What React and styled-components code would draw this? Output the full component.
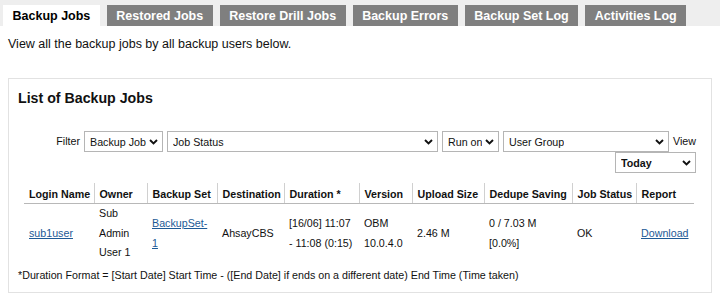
import React from 'react';
import styled, { createGlobalStyle } from 'styled-components';

const GlobalStyle = createGlobalStyle`
  body {
    margin: 0;
    background: #fff;
    font-family: "Liberation Sans", Arial, sans-serif;
    font-size: 10.7px;
    color: #111;
  }
`;

const tabs = ['Backup Jobs', 'Restored Jobs', 'Restore Drill Jobs', 'Backup Errors', 'Backup Set Log', 'Activities Log'];

const columns = [
  { title: 'Login Name', width: 70 },
  { title: 'Owner', width: 53 },
  { title: 'Backup Set', width: 70 },
  { title: 'Destination', width: 67 },
  { title: 'Duration *', width: 75 },
  { title: 'Version', width: 53 },
  { title: 'Upload Size', width: 72 },
  { title: 'Dedupe Saving', width: 88 },
  { title: 'Job Status', width: 64 },
  { title: 'Report', width: 58 },
];

function Chevron() {
  return (
    <svg width="9" height="6" viewBox="0 0 9 6">
      <path d="M1 1 L4.5 4.5 L8 1" fill="none" stroke="#111" strokeWidth="1.9" />
    </svg>
  );
}

function Select({ value, width, bold }) {
  return (
    <SelectBox $width={width} $bold={bold}>
      <span>{value}</span>
      <Chevron />
    </SelectBox>
  );
}

export default function App() {
  return (
    <>
      <GlobalStyle />
      <TabBar>
        {tabs.map((t, i) => (
          <Tab key={t} $active={i === 0}>{t}</Tab>
        ))}
      </TabBar>
      <Intro>View all the backup jobs by all backup users below.</Intro>
      <Panel>
        <PanelTitle>List of Backup Jobs</PanelTitle>
        <Filters>
          <Label>Filter</Label>
          <Select value="Backup Job" width={79} />
          <Select value="Job Status" width={271} />
          <Select value="Run on" width={57} />
          <Select value="User Group" width={166} />
          <Label>View</Label>
          <Break />
          <Select value="Today" width={81} bold />
        </Filters>
        <Table>
          <thead>
            <tr>
              {columns.map((c) => (
                <Th key={c.title} style={{ width: c.width }}>{c.title}</Th>
              ))}
            </tr>
          </thead>
          <tbody>
            <tr>
              <Td><Link>sub1user</Link></Td>
              <Td>Sub<br />Admin<br />User 1</Td>
              <Td><Link>BackupSet-<br />1</Link></Td>
              <Td>AhsayCBS</Td>
              <Td>[16/06] 11:07<br />- 11:08 (0:15)</Td>
              <Td>OBM<br />10.0.4.0</Td>
              <Td>2.46 M</Td>
              <Td>0 / 7.03 M<br />[0.0%]</Td>
              <Td>OK</Td>
              <Td><Link>Download</Link></Td>
            </tr>
          </tbody>
        </Table>
        <Note>*Duration Format = [Start Date] Start Time - ([End Date] if ends on a different date) End Time (Time taken)</Note>
      </Panel>
    </>
  );
}

const TabBar = styled.div`
  display: flex;
  gap: 7px;
  height: 26px;
  padding: 5px 0 0 3px;
  box-sizing: border-box;
  background: #eeeeee;
`;

const Tab = styled.div`
  display: flex;
  align-items: center;
  padding: 0 9.5px;
  font-size: 12.5px;
  font-weight: bold;
  background: ${(p) => (p.$active ? '#fff' : '#7f7f7f')};
  color: ${(p) => (p.$active ? '#000' : '#fff')};
`;

const Intro = styled.div`
  padding: 10px 0 0 8px;
  height: 42px;
  box-sizing: border-box;
  font-size: 12.5px;
  line-height: 16px;
`;

const Panel = styled.div`
  margin: 10px 8px 0;
  height: 215px;
  box-sizing: border-box;
  border: 1px solid #e2e2e2;
  padding: 11px 0 0 9px;
`;

const PanelTitle = styled.div`
  font-size: 14.2px;
  font-weight: bold;
  line-height: 16px;
`;

const Filters = styled.div`
  display: flex;
  flex-wrap: wrap;
  justify-content: flex-end;
  align-items: center;
  column-gap: 4px;
  margin: 25px 15px 0 0;
`;

const Break = styled.div`
  flex-basis: 100%;
  height: 0;
`;

const Label = styled.span`
  line-height: 16px;
  margin-top: -2px;
`;

const SelectBox = styled.div`
  display: flex;
  align-items: center;
  justify-content: space-between;
  width: ${(p) => p.$width}px;
  height: 21px;
  box-sizing: border-box;
  padding: 0 4px 0 5px;
  border: 1px solid #b5b5b5;
  background: #fff;
  font-weight: ${(p) => (p.$bold ? 'bold' : 'normal')};
  white-space: nowrap;
  overflow: hidden;
  span { overflow: hidden; }
  svg { flex-shrink: 0; margin-left: 2px; }
`;

const Table = styled.table`
  border-collapse: collapse;
  table-layout: fixed;
  width: 670px;
  margin: 10px 0 0 6px;
`;

const Th = styled.th`
  box-sizing: border-box;
  text-align: left;
  font-weight: bold;
  padding: 3px 5px 1px;
  line-height: 16px;
  border-bottom: 1px solid #b8b8b8;
  border-left: 1px solid #d0d0d0;
  white-space: nowrap;
  &:first-child { border-left: none; }
`;

const Td = styled.td`
  padding: 0 5px;
  line-height: 19.7px;
  vertical-align: middle;
`;

const Link = styled.a`
  color: #1d5a96;
  text-decoration: underline;
  cursor: pointer;
`;

const Note = styled.div`
  margin-top: 3px;
  line-height: 18px;
`;
